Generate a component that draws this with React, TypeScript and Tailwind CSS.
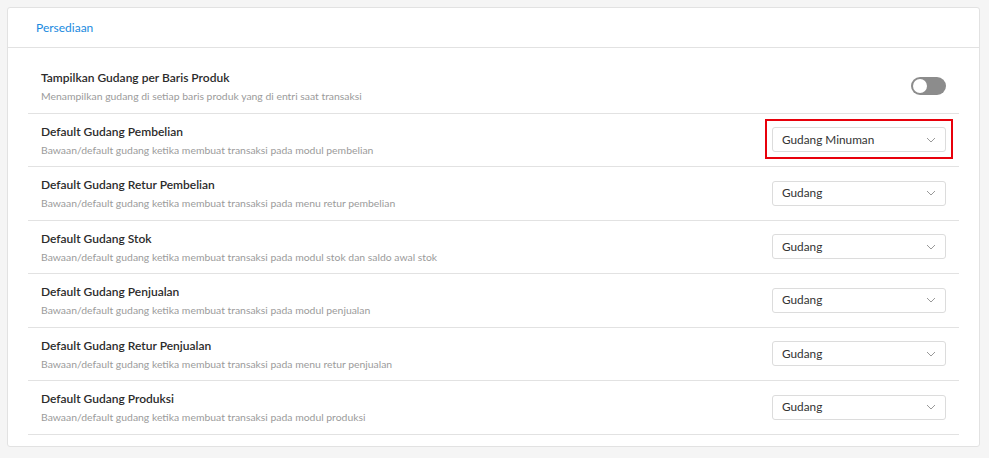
import React from 'react';

type Row = {
  title: string;
  desc: string;
  value?: string;
  highlight?: boolean;
  toggle?: boolean;
};

const rows: Row[] = [
  {
    title: 'Tampilkan Gudang per Baris Produk',
    desc: 'Menampilkan gudang di setiap baris produk yang di entri saat transaksi',
    toggle: true,
  },
  {
    title: 'Default Gudang Pembelian',
    desc: 'Bawaan/default gudang ketika membuat transaksi pada modul pembelian',
    value: 'Gudang Minuman',
    highlight: true,
  },
  {
    title: 'Default Gudang Retur Pembelian',
    desc: 'Bawaan/default gudang ketika membuat transaksi pada menu retur pembelian',
    value: 'Gudang',
  },
  {
    title: 'Default Gudang Stok',
    desc: 'Bawaan/default gudang ketika membuat transaksi pada modul stok dan saldo awal stok',
    value: 'Gudang',
  },
  {
    title: 'Default Gudang Penjualan',
    desc: 'Bawaan/default gudang ketika membuat transaksi pada modul penjualan',
    value: 'Gudang',
  },
  {
    title: 'Default Gudang Retur Penjualan',
    desc: 'Bawaan/default gudang ketika membuat transaksi pada menu retur penjualan',
    value: 'Gudang',
  },
  {
    title: 'Default Gudang Produksi',
    desc: 'Bawaan/default gudang ketika membuat transaksi pada modul produksi',
    value: 'Gudang',
  },
];

const Chevron = () => (
  <svg width="10" height="6" viewBox="0 0 10 6" fill="none" className="text-[#999]">
    <path d="M1 1l4 4 4-4" stroke="currentColor" strokeWidth="1" />
  </svg>
);

const Select: React.FC<{ value: string; highlight?: boolean }> = ({ value, highlight }) => (
  <div className="relative">
    {highlight && <span className="absolute -left-[7px] -right-[7px] -top-[8px] -bottom-[7px] border-2 border-[#e8000b]" />}
    <div className="w-[174px] h-[25px] flex items-center justify-between pl-[9px] pr-[9px] border border-[#dcdcdc] rounded-[3px] bg-white text-[11.8px] text-[#333]">
      <span>{value}</span>
      <Chevron />
    </div>
  </div>
);

const Toggle = () => (
  <div className="w-[35px] h-[18px] rounded-full bg-[#8c8c8c] p-[2px] flex items-center">
    <div className="w-[14px] h-[14px] rounded-full bg-white" />
  </div>
);

export default function App() {
  return (
    <div
      className="min-h-[458px] bg-[#f5f5f5] p-[7px] pr-[9px]"
      style={{ fontFamily: 'Lato, "Liberation Sans", sans-serif' }}
    >
      <div className="bg-white border border-[#e2e2e2] rounded-[3px] h-[440px]">
        <div className="h-[40px] flex items-center pl-[28px] border-b border-[#e2e2e2] text-[12px] text-[#1a8ae0]">
          Persediaan
        </div>
        <div className="px-[20px] pt-[12px]">
          {rows.map((r, i) => (
            <div
              key={i}
              className="h-[53.5px] flex items-center justify-between pl-[13px] pr-[13px] border-b border-[#e2e2e2]"
            >
              <div className="flex flex-col pt-[2px]">
                <span className="text-[12px] font-semibold text-[#2b2b2b] leading-[18px]">{r.title}</span>
                <span className="text-[10.4px] text-[#9b9b9b] leading-[18px]">{r.desc}</span>
              </div>
              {r.toggle ? <Toggle /> : <Select value={r.value!} highlight={r.highlight} />}
            </div>
          ))}
        </div>
      </div>
    </div>
  );
}
